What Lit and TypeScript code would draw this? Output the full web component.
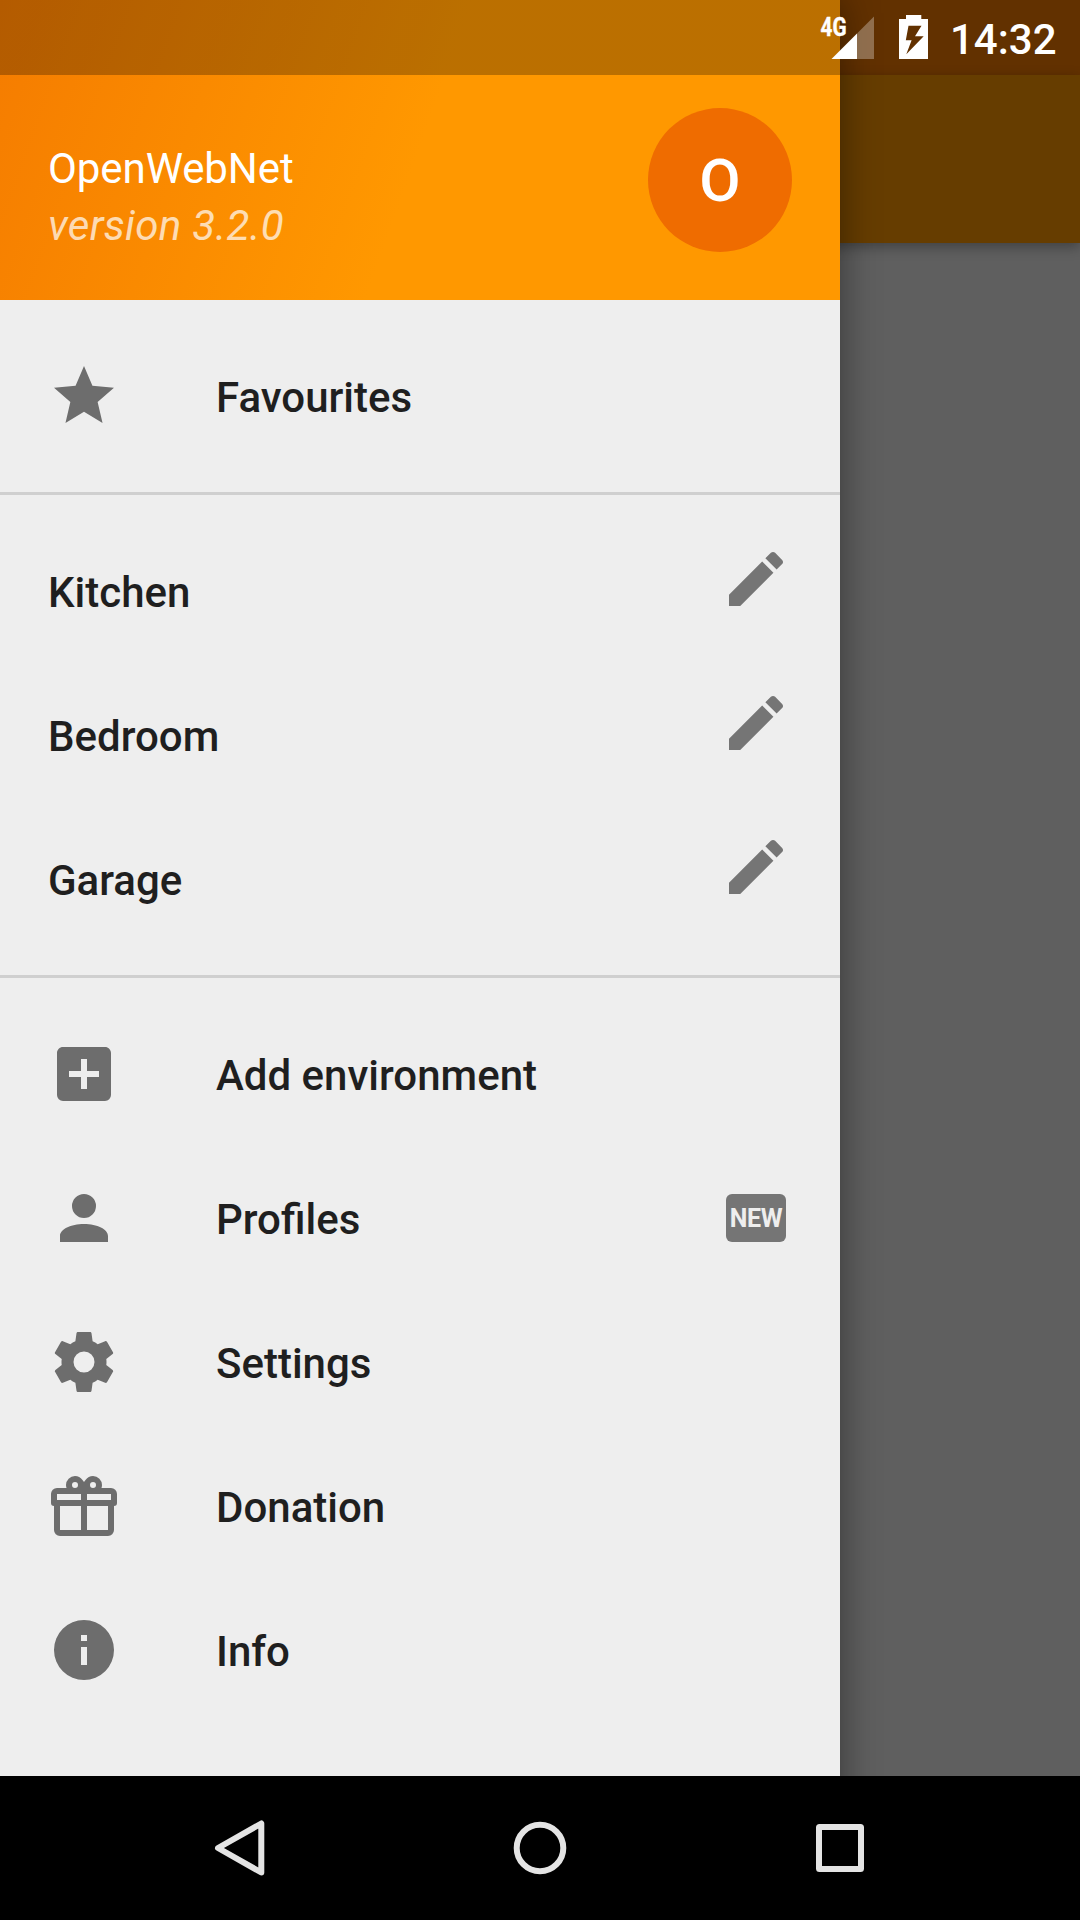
import { LitElement, html, css, svg, nothing } from "lit";
import { customElement, property } from "lit/decorators.js";

const ICONS: Record<string, string> = {
  star: "M12,17.27L18.18,21L16.54,13.97L22,9.24L14.81,8.62L12,2L9.19,8.62L2,9.24L7.45,13.97L5.82,21L12,17.27Z",
  pencil:
    "M20.71,7.04C21.1,6.65 21.1,6 20.71,5.63L18.37,3.29C18,2.9 17.35,2.9 16.96,3.29L15.12,5.12L18.87,8.87M3,17.25V21H6.75L17.81,9.93L14.06,6.18L3,17.25Z",
  plus: "M17,13H13V17H11V13H7V11H11V7H13V11H17M19,3H5C3.89,3 3,3.89 3,5V19A2,2 0 0,0 5,21H19A2,2 0 0,0 21,19V5C21,3.89 20.1,3 19,3Z",
  person:
    "M12,4A4,4 0 0,1 16,8A4,4 0 0,1 12,12A4,4 0 0,1 8,8A4,4 0 0,1 12,4M12,14C16.42,14 20,15.79 20,18V20H4V18C4,15.79 7.58,14 12,14Z",
  gear: "M12,15.5A3.5,3.5 0 0,1 8.5,12A3.5,3.5 0 0,1 12,8.5A3.5,3.5 0 0,1 15.5,12A3.5,3.5 0 0,1 12,15.5M19.43,12.97C19.47,12.65 19.5,12.33 19.5,12C19.5,11.67 19.47,11.34 19.43,11L21.54,9.37C21.73,9.22 21.78,8.95 21.66,8.73L19.66,5.27C19.54,5.05 19.27,4.96 19.05,5.05L16.56,6.05C16.04,5.66 15.5,5.32 14.87,5.07L14.5,2.42C14.46,2.18 14.25,2 14,2H10C9.75,2 9.54,2.18 9.5,2.42L9.13,5.07C8.5,5.32 7.96,5.66 7.44,6.05L4.95,5.05C4.73,4.96 4.46,5.05 4.34,5.27L2.34,8.73C2.21,8.95 2.27,9.22 2.46,9.37L4.57,11C4.53,11.34 4.5,11.67 4.5,12C4.5,12.33 4.53,12.65 4.57,12.97L2.46,14.63C2.27,14.78 2.21,15.05 2.34,15.27L4.34,18.73C4.46,18.95 4.73,19.03 4.95,18.95L7.44,17.94C7.96,18.34 8.5,18.68 9.13,18.93L9.5,21.58C9.54,21.82 9.75,22 10,22H14C14.25,22 14.46,21.82 14.5,21.58L14.87,18.93C15.5,18.67 16.04,18.34 16.56,17.94L19.05,18.95C19.27,19.03 19.54,18.95 19.66,18.73L21.66,15.27C21.78,15.05 21.73,14.78 21.54,14.63L19.43,12.97Z",
  gift: "M22,12V20A2,2 0 0,1 20,22H4A2,2 0 0,1 2,20V12A1,1 0 0,1 1,11V8A2,2 0 0,1 3,6H6.17C6.06,5.69 6,5.35 6,5A3,3 0 0,1 9,2C10,2 10.88,2.5 11.43,3.24V3.23L12,4L12.57,3.23V3.24C13.12,2.5 14,2 15,2A3,3 0 0,1 18,5C18,5.35 17.94,5.69 17.83,6H21A2,2 0 0,1 23,8V11A1,1 0 0,1 22,12M4,20H11V12H4V20M20,20V12H13V20H20M9,4A1,1 0 0,0 8,5A1,1 0 0,0 9,6A1,1 0 0,0 10,5A1,1 0 0,0 9,4M15,4A1,1 0 0,0 14,5A1,1 0 0,0 15,6A1,1 0 0,0 16,5A1,1 0 0,0 15,4M3,8V10H11V8H3M13,8V10H21V8H13Z",
  info: "M13,9H11V7H13M13,17H11V11H13M12,2A10,10 0 0,0 2,12A10,10 0 0,0 12,22A10,10 0 0,0 22,12A10,10 0 0,0 12,2Z",
};

@customElement("menu-row")
export class MenuRow extends LitElement {
  @property() label = "";
  @property() icon = "";
  @property() action = "";
  @property() badge = "";

  static styles = css`
    :host {
      display: flex;
      align-items: center;
      height: 144px;
      padding: 0 48px;
      box-sizing: border-box;
    }
    .icon {
      width: 72px;
      height: 72px;
      margin-right: 96px;
      fill: #6d6d6d;
      flex: none;
    }
    .label {
      flex: 1;
      font: 500 42px/50px Roboto, sans-serif;
      color: #1f1f1f;
      padding-top: 4px;
    }
    .action {
      width: 72px;
      height: 72px;
      align-self: flex-start;
      margin-top: 24px;
      fill: #757575;
    }
    .badge {
      display: flex;
      align-items: center;
      justify-content: center;
      width: 60px;
      height: 48px;
      padding-top: 2px;
      box-sizing: border-box;
      margin-right: 6px;
      border-radius: 6px;
      background: #757575;
      color: #eee;
      font: 700 25px/30px Roboto, sans-serif;
      letter-spacing: -0.3px;
    }
  `;

  render() {
    return html`
      ${this.icon
        ? html`<svg class="icon" viewBox="0 0 24 24"><path fill-rule="evenodd" d=${ICONS[this.icon]} /></svg>`
        : nothing}
      <span class="label">${this.label}</span>
      ${this.action
        ? html`<svg class="action" viewBox="0 0 24 24"><path d=${ICONS[this.action]} /></svg>`
        : nothing}
      ${this.badge ? html`<span class="badge">${this.badge}</span>` : nothing}
    `;
  }
}

@customElement("status-bar")
export class StatusBar extends LitElement {
  static styles = css`
    :host {
      display: flex;
      justify-content: flex-end;
      height: 75px;
      padding-right: 25px;
      box-sizing: border-box;
      color: #fff;
    }
    .glyphs {
      width: 130px;
      height: 75px;
    }
    .net {
      font: 700 25px Roboto, sans-serif;
      fill: #fff;
      stroke: #fff;
      stroke-width: 0.4;
    }
    .time {
      font: 500 42px/50px Roboto, sans-serif;
      padding-top: 15px;
      width: 105px;
      text-align: right;
    }
  `;

  render() {
    return html`
      <svg class="glyphs" viewBox="820 0 130 75">
        <text class="net" x="820.5" y="35.5" textLength="26" lengthAdjust="spacingAndGlyphs">4G</text>
        ${svg`
          <path d="M874,16.5V59H857V33.5Z" fill="#fff" fill-opacity=".3" />
          <path d="M857,33.5V59H831.5Z" fill="#fff" />
          <path fill="#fff" fill-rule="evenodd"
            d="M906,15H921.3V19H928V59H899V19H906ZM908.5,25.8L905.8,40.3H911.6L906.3,54.3L923.7,36.3H915L921.5,25.8Z" />
        `}
      </svg>
      <span class="time">14:32</span>
    `;
  }
}

@customElement("nav-bar")
export class NavBar extends LitElement {
  static styles = css`
    :host {
      display: flex;
      justify-content: center;
      align-items: center;
      gap: 156px;
      height: 144px;
      background: #000;
    }
    .key {
      width: 144px;
      height: 144px;
      fill: none;
      stroke: #e4e4e4;
      stroke-width: 6;
      stroke-linejoin: round;
    }
  `;

  render() {
    return html`
      <svg class="key" viewBox="168 0 144 144"><path d="M261.3,47.5V96.5L218,72Z" /></svg>
      <svg class="key" viewBox="468 0 144 144"><circle cx="540" cy="72" r="23.3" /></svg>
      <svg class="key" viewBox="768 0 144 144"><rect x="819" y="51" width="42" height="42" rx="0.5" /></svg>
    `;
  }
}

@customElement("app-root")
export class AppRoot extends LitElement {
  static styles = css`
    :host {
      display: block;
      width: 1080px;
      height: 1920px;
      overflow: hidden;
      font-family: Roboto, sans-serif;
    }
    .screen {
      position: relative;
      height: 1776px;
      overflow: hidden;
      background: #5f5f5f;
    }
    .behind-status {
      height: 75px;
      background: #623100;
    }
    .toolbar {
      height: 168px;
      background: #663d00;
      box-shadow: 0 4px 12px rgba(0, 0, 0, 0.32);
    }
    .drawer {
      position: absolute;
      inset: 0 auto -60px 0;
      width: 840px;
      background: #eee;
      box-shadow: 0 0 36px rgba(0, 0, 0, 0.44);
    }
    .status {
      position: absolute;
      inset: 0 0 auto 0;
    }
    .header {
      display: flex;
      justify-content: space-between;
      height: 300px;
      padding: 0 48px;
      box-sizing: border-box;
      color: #fff;
      background: linear-gradient(rgba(0, 0, 0, 0.267) 75px, transparent 75px),
        linear-gradient(109.65deg, #f57c00, #ff9800 50%, #ff9800);
    }
    .titles {
      display: flex;
      flex-direction: column;
      gap: 7px;
      padding-top: 144px;
      font-size: 42px;
      line-height: 50px;
      letter-spacing: -0.08px;
    }
    .version {
      font-style: italic;
      letter-spacing: 0.3px;
      opacity: 0.7;
    }
    .avatar {
      display: flex;
      align-items: center;
      justify-content: center;
      width: 144px;
      height: 144px;
      margin-top: 108px;
      border-radius: 50%;
      background: #ef6c00;
      font-size: 60px;
      font-weight: 500;
    }
    .group {
      padding: 24px 0;
    }
    .group + .group {
      border-top: 3px solid #cfcfcf;
    }
  `;

  render() {
    return html`
      <div class="screen">
        <div class="behind-status"></div>
        <div class="toolbar"></div>
        <aside class="drawer">
          <header class="header">
            <div class="titles">
              <span>OpenWebNet</span>
              <span class="version">version 3.2.0</span>
            </div>
            <div class="avatar">O</div>
          </header>
          <div class="group">
            <menu-row icon="star" label="Favourites"></menu-row>
          </div>
          <div class="group">
            ${["Kitchen", "Bedroom", "Garage"].map(
              (room) => html`<menu-row label=${room} action="pencil"></menu-row>`
            )}
          </div>
          <div class="group">
            <menu-row icon="plus" label="Add environment"></menu-row>
            <menu-row icon="person" label="Profiles" badge="NEW"></menu-row>
            <menu-row icon="gear" label="Settings"></menu-row>
            <menu-row icon="gift" label="Donation"></menu-row>
            <menu-row icon="info" label="Info"></menu-row>
          </div>
        </aside>
        <status-bar class="status"></status-bar>
      </div>
      <nav-bar></nav-bar>
    `;
  }
}
